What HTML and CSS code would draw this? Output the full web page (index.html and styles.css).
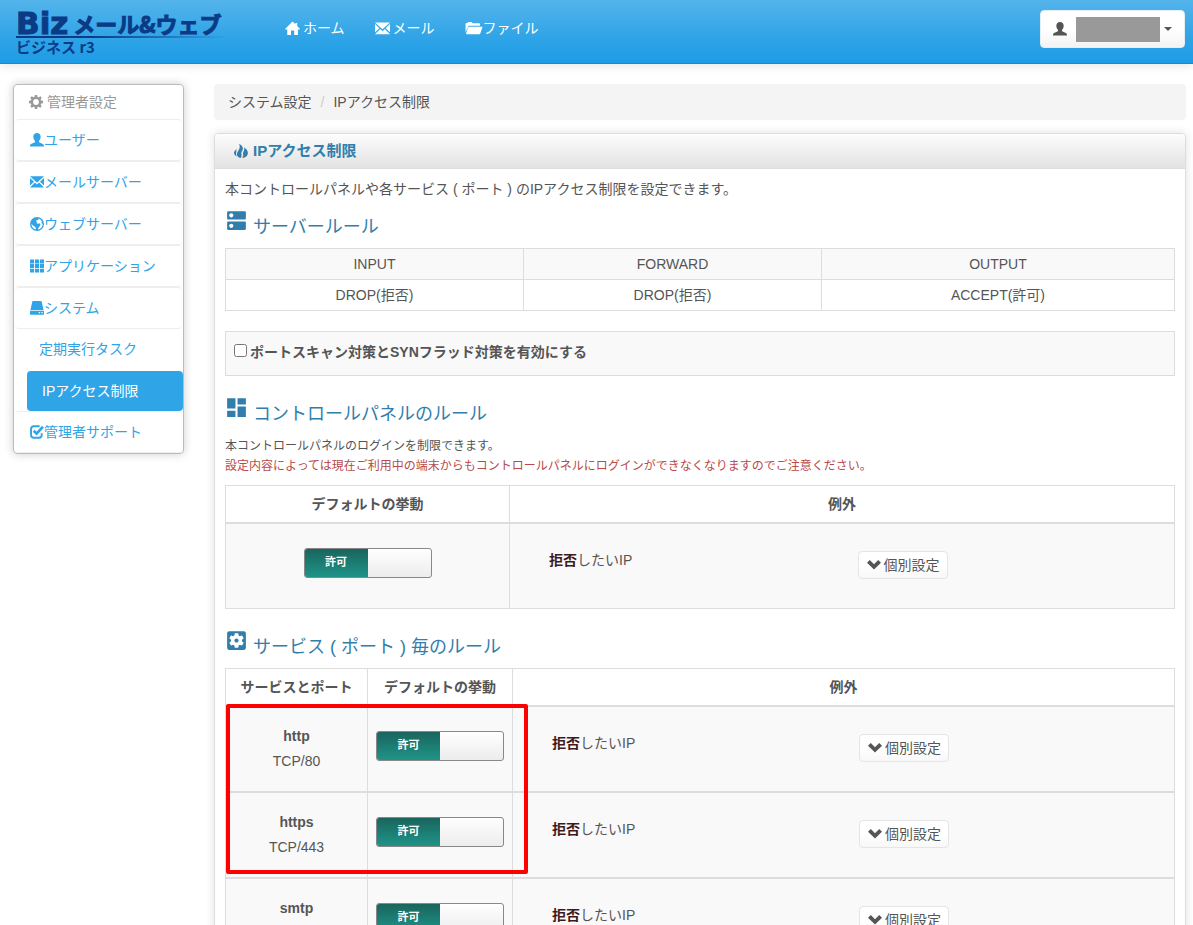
FILE: index.html
```html
<!DOCTYPE html>
<html lang="ja">
<head>
<meta charset="utf-8">
<title>IPアクセス制限</title>
<link rel="stylesheet" href="styles.css">
</head>
<body>
<svg class="sprite" aria-hidden="true">
  <symbol id="i-home" viewBox="0 0 16 16"><path d="M8 .5 11 3.400V2h2v3.300L16 8.400 15.300 9H13.800V15H9.800V10H6.400V15H2.400V9H.7L0 8.400z"/></symbol>
  <symbol id="i-mail" viewBox="0 0 16 16"><path d="M0 1.500H16L8 8.800zM0 3.300 4.600 7.600 0 12zM16 3.300V12L11.400 7.600zM5.600 8.600 8 10.800 10.400 8.600 16 14.200H0z"/></symbol>
  <symbol id="i-folder" viewBox="0 0 18 16"><path d="M0 12V3.500C0 2.500.5 2 1.500 2H2L3 1H6.500L7.500 2.500H14C15 2.500 15.500 3 15.500 4V5H4.500C3.500 5 3 5.300 2.700 6zM4 6H17.300C17.900 6 18.100 6.400 17.900 7L15.800 13C15.600 13.700 15.200 14 14.500 14H1.200C.6 14 .4 13.600.6 13L2.700 7C3 6.300 3.300 6 4 6z"/></symbol>
  <symbol id="i-user" viewBox="0 0 16 16"><path d="M8 0C10.500 0 12.200 1.600 12.200 4.300 12.200 6.500 11.300 8 10.300 9V10.200C10.300 10.800 14.400 11.900 15.400 13 15.800 13.500 16 14.200 16 15.500H0C0 14.200.2 13.500.6 13 1.600 11.900 5.700 10.800 5.700 10.200V9C4.700 8 3.800 6.500 3.800 4.300 3.800 1.600 5.500 0 8 0z"/></symbol>
  <symbol id="i-cog" viewBox="0 0 16 16"><path fill-rule="evenodd" d="M6.700 0H9.300L9.700 2.200 11 2.800 12.900 1.500 14.600 3.200 13.300 5 13.800 6.400 16 6.700V9.300L13.800 9.700 13.300 11 14.600 12.800 12.800 14.600 11 13.300 9.700 13.800 9.300 16H6.700L6.300 13.800 5 13.300 3.200 14.600 1.400 12.800 2.700 11 2.200 9.700 0 9.300V6.700L2.200 6.300 2.700 5 1.400 3.200 3.200 1.400 5 2.700 6.300 2.200zM8 4.700A3.300 3.300 0 1 0 8 11.300 3.300 3.300 0 1 0 8 4.700z"/></symbol>
  <symbol id="i-globe" viewBox="0 0 16 16"><path fill-rule="evenodd" d="M8 0A8 8 0 1 1 8 16 8 8 0 1 1 8 0zM9 1.600 10 3.500 8 3.300 6.800 4.500 8 5.600 7.500 7 9.300 7.600 11 7.200 12 8.600 11 10.500 9.600 12.600 9 14.300C12.300 13.800 14.400 11.200 14.500 8.200L13 6.600 13.600 5 11.600 2.700zM1.600 8C1.600 10.700 3.500 13.500 6.500 14.300L6.800 12.500 5.300 10.800 3.600 9.800z"/></symbol>
  <symbol id="i-th" viewBox="0 0 16 16"><path d="M0 .5H4.700V5H0zM5.700.5H10.300V5H5.700zM11.300.5H16V5H11.300zM0 5.700H4.700V10.200H0zM5.700 5.700H10.300V10.200H5.700zM11.300 5.700H16V10.200H11.300zM0 11H4.700V15.500H0zM5.700 11H10.300V15.500H5.700zM11.300 11H16V15.500H11.300z"/></symbol>
  <symbol id="i-hdd" viewBox="0 0 16 16"><path fill-rule="evenodd" d="M3.500 0H12.500C13 0 13.300.4 13.400.9L15.500 10.300H.5L2.600.9C2.700.4 3 0 3.500 0zM0 11.200H16V15.700H0zM10 12.700V14H11.500V12.700zM13 12.700V14H14.500V12.700z"/></symbol>
  <symbol id="i-check" viewBox="0 0 16 16"><path d="M11 1.500H4.300Q1.200 1.500 1.200 4.600V11.400Q1.200 14.500 4.300 14.500H10.400Q13.400 14.500 13.400 11.400V9.500" fill="none" stroke="currentColor" stroke-width="2.200"/><path d="M4.200 6.600 7.500 9.800 14.800 2" fill="none" stroke="currentColor" stroke-width="3"/></symbol>
  <symbol id="i-fire" viewBox="0 0 16 16"><path d="M5.800 0C9.500 1.500 11 4.300 9.700 7 8.800 8.800 8 9.800 8.600 12 9 13.500 8.400 15 7.500 16 3.800 15.200 2.600 12.500 3.800 9.600 5 6.800 8 4.500 5.800 0zM11.400 3.800C14.700 5.800 17 9.200 15.300 12.500 14.300 14.500 12.500 15.800 9.300 16 10.900 14 10.500 12.500 10.300 11 10.200 8.500 12.700 7.500 11.400 3.800zM2.700 5.500C3.300 8.300 1.500 10 3 14.300.6 13-.5 11 .2 9 .7 7.400 2.500 7.200 2.700 5.500z"/></symbol>
  <symbol id="i-chevron" viewBox="0 0 16 16"><path d="M3.200 2.300 8 7.200 12.800 2.300 16 5.400 8 13.200 0 5.400z"/></symbol>
  <symbol id="i-dns" viewBox="0 0 24 24"><path d="M20 13H4c-.55 0-1 .45-1 1v6c0 .55.45 1 1 1h16c.55 0 1-.45 1-1v-6c0-.55-.45-1-1-1zM7 19c-1.100 0-2-.9-2-2s.9-2 2-2 2 .9 2 2-.9 2-2 2zM20 3H4c-.55 0-1 .45-1 1v6c0 .55.45 1 1 1h16c.55 0 1-.45 1-1V4c0-.55-.45-1-1-1zM7 9c-1.100 0-2-.9-2-2s.9-2 2-2 2 .9 2 2-.9 2-2 2z"/></symbol>
  <symbol id="i-dash" viewBox="0 0 24 24"><path d="M3 13h8V3H3v10zm0 8h8v-6H3v6zm10 0h8V11h-8v10zm0-18v6h8V3h-8z"/></symbol>
  <symbol id="i-apps" viewBox="0 0 24 24"><path d="M12 10c-1.100 0-2 .9-2 2s.9 2 2 2 2-.9 2-2-.9-2-2-2zm7-7H5c-1.110 0-2 .9-2 2v14c0 1.100.89 2 2 2h14c1.110 0 2-.9 2-2V5c0-1.100-.89-2-2-2zm-1.750 9c0 .23-.02.46-.05.68l1.480 1.160c.13.11.17.3.08.45l-1.400 2.420c-.09.15-.27.21-.43.15l-1.740-.7c-.36.28-.76.51-1.180.69l-.26 1.850c-.03.17-.18.3-.35.3h-2.800c-.17 0-.32-.13-.35-.29l-.26-1.850c-.43-.18-.82-.41-1.180-.69l-1.740.7c-.16.06-.34 0-.43-.15l-1.400-2.420c-.09-.15-.05-.34.08-.45l1.480-1.160c-.03-.23-.05-.46-.05-.69 0-.23.02-.46.05-.68l-1.480-1.160c-.13-.11-.17-.3-.08-.45l1.400-2.420c.09-.15.27-.21.43-.15l1.740.7c.36-.28.76-.51 1.180-.69l.26-1.850c.03-.17.18-.3.35-.3h2.800c.17 0 .32.13.35.29l.26 1.850c.43.18.82.41 1.180.69l1.740-.7c.16-.06.34 0 .43.15l1.400 2.420c.09.15.05.34-.08.45l-1.480 1.160c.03.23.05.46.05.69z"/></symbol>
</svg>

<header class="topbar">
  <a class="logo" href="#">
    <span class="logo-main"><span class="logo-biz">Biz</span>メール&amp;ウェブ</span>
    <span class="logo-sub">ビジネス r3</span>
  </a>
  <nav class="topnav">
    <a href="#"><svg class="icon wide"><use href="#i-home"/></svg>ホーム</a>
    <a href="#"><svg class="icon wide"><use href="#i-mail"/></svg>メール</a>
    <a href="#"><svg class="icon folder"><use href="#i-folder"/></svg>ファイル</a>
  </nav>
  <button class="user" type="button" aria-label="ユーザーメニュー">
    <svg class="icon"><use href="#i-user"/></svg>
    <span class="mask"></span>
    <span class="caret"></span>
  </button>
</header>

<div class="layout">
  <aside class="side">
    <div class="side-title"><svg class="icon"><use href="#i-cog"/></svg>管理者設定</div>
    <a class="item" href="#"><svg class="icon"><use href="#i-user"/></svg>ユーザー</a>
    <a class="item" href="#"><svg class="icon"><use href="#i-mail"/></svg>メールサーバー</a>
    <a class="item" href="#"><svg class="icon"><use href="#i-globe"/></svg>ウェブサーバー</a>
    <a class="item" href="#"><svg class="icon"><use href="#i-th"/></svg>アプリケーション</a>
    <a class="item" href="#"><svg class="icon"><use href="#i-hdd"/></svg>システム</a>
    <a class="sub" href="#">定期実行タスク</a>
    <a class="sub active" href="#">IPアクセス制限</a>
    <a class="item" href="#"><svg class="icon"><use href="#i-check"/></svg>管理者サポート</a>
  </aside>

  <main class="content">
    <nav class="crumbs"><a href="#">システム設定</a><span class="slash">/</span><span>IPアクセス制限</span></nav>

    <section class="panel">
      <h2 class="panel-title"><svg class="icon"><use href="#i-fire"/></svg>IPアクセス制限</h2>
      <div class="panel-body">
        <p class="lead">本コントロールパネルや各サービス ( ポート ) のIPアクセス制限を設定できます。</p>

        <h3 class="heading first"><svg class="glyph"><use href="#i-dns"/></svg><span>サーバールール</span></h3>
        <table class="grid rules">
          <colgroup><col class="c-third"><col class="c-third"><col></colgroup>
          <tr class="shade"><td>INPUT</td><td>FORWARD</td><td>OUTPUT</td></tr>
          <tr><td>DROP(拒否)</td><td>DROP(拒否)</td><td>ACCEPT(許可)</td></tr>
        </table>

        <div class="option"><input type="checkbox" id="scan"><label for="scan">ポートスキャン対策とSYNフラッド対策を有効にする</label></div>

        <h3 class="heading"><svg class="glyph"><use href="#i-dash"/></svg><span>コントロールパネルのルール</span></h3>
        <div class="notes">
          <p>本コントロールパネルのログインを制限できます。</p>
          <p class="warn">設定内容によっては現在ご利用中の端末からもコントロールパネルにログインができなくなりますのでご注意ください。</p>
        </div>
        <table class="grid access panel-rule">
          <colgroup><col class="c-default"><col></colgroup>
          <thead><tr><th>デフォルトの挙動</th><th>例外</th></tr></thead>
          <tbody>
            <tr>
              <td><button class="switch" type="button" role="switch" aria-checked="true"><span>許可</span></button></td>
              <td><div class="exception"><span class="what"><b>拒否</b>したいIP</span><button class="detail" type="button"><svg class="icon"><use href="#i-chevron"/></svg>個別設定</button></div></td>
            </tr>
          </tbody>
        </table>

        <h3 class="heading"><svg class="glyph"><use href="#i-apps"/></svg><span>サービス ( ポート ) 毎のルール</span></h3>
        <div class="services">
          <table class="grid access">
            <colgroup><col class="c-service"><col class="c-toggle"><col></colgroup>
            <thead><tr><th>サービスとポート</th><th>デフォルトの挙動</th><th>例外</th></tr></thead>
            <tbody>
              <tr>
                <td class="port-cell"><div class="port"><b>http</b><span>TCP/80</span></div></td>
                <td><button class="switch" type="button" role="switch" aria-checked="true"><span>許可</span></button></td>
                <td><div class="exception"><span class="what"><b>拒否</b>したいIP</span><button class="detail" type="button"><svg class="icon"><use href="#i-chevron"/></svg>個別設定</button></div></td>
              </tr>
              <tr>
                <td class="port-cell"><div class="port"><b>https</b><span>TCP/443</span></div></td>
                <td><button class="switch" type="button" role="switch" aria-checked="true"><span>許可</span></button></td>
                <td><div class="exception"><span class="what"><b>拒否</b>したいIP</span><button class="detail" type="button"><svg class="icon"><use href="#i-chevron"/></svg>個別設定</button></div></td>
              </tr>
              <tr>
                <td class="port-cell"><div class="port"><b>smtp</b></div></td>
                <td><button class="switch" type="button" role="switch" aria-checked="true"><span>許可</span></button></td>
                <td><div class="exception"><span class="what"><b>拒否</b>したいIP</span><button class="detail" type="button"><svg class="icon"><use href="#i-chevron"/></svg>個別設定</button></div></td>
              </tr>
            </tbody>
          </table>
          <div class="marker"></div>
        </div>
      </div>
    </section>
  </main>
</div>
</body>
</html>
```

FILE: styles.css
```css
* { box-sizing: border-box; }

html { scrollbar-width: none; }

body {
  margin: 0;
  background: #fff;
  color: #555;
  font: 14px/20px "Liberation Sans", "Noto Sans CJK JP", sans-serif;
}

a { color: inherit; text-decoration: none; }
h2, h3, p { margin: 0; font-weight: normal; }
button { font: inherit; color: inherit; cursor: pointer; }

.sprite { display: none; }
.icon { width: 14px; height: 14px; flex: none; fill: currentColor; }
.icon.wide { width: 15px; height: 15px; }
.icon.folder { width: 18px; height: 15px; }

/* top bar */
.topbar {
  display: flex;
  align-items: flex-start;
  min-height: 64px;
  padding: 0 8px 0 16px;
  border-bottom: 1px solid #178acc;
  background: linear-gradient(#54b4eb, #2fa4e7 60%, #1d9ce5);
  box-shadow: 0 1px 10px rgba(0, 0, 0, 0.12);
}

.logo {
  display: flex;
  flex-direction: column;
  width: 240px;
  padding-top: 10px;
  color: #0b3a86;
  font-family: "Noto Sans CJK JP", sans-serif;
  font-weight: bold;
}
.logo-main {
  display: flex;
  align-items: center;
  gap: 5px;
  height: 28px;
  font-size: 22px;
  line-height: 24px;
  white-space: nowrap;
  -webkit-text-stroke: 1px #0b3a86;
  border-bottom: 2px solid;
  border-image: linear-gradient(90deg, #0b3a86 30%, transparent 88%) 1;
}
.logo-biz {
  font-family: "DejaVu Sans", sans-serif;
  font-size: 31px;
}
.logo-sub { font-size: 15px; line-height: 17px; }

.topnav {
  display: flex;
  gap: 30px;
  padding-top: 18px;
  margin-left: 29px;
  color: #fff;
}
.topnav a { display: flex; align-items: center; gap: 3px; }
.topnav a:last-child { gap: 0; }

.user {
  display: flex;
  align-items: center;
  gap: 9px;
  height: 38px;
  margin: 10px 0 0 auto;
  padding: 0 12px;
  border: 1px solid #e4eef5;
  border-radius: 4px;
  background: linear-gradient(#fff 50%, #f3f3f3);
}
.mask { width: 84px; height: 25px; background: #999; }
.caret { border: 4px solid transparent; border-top-color: #555; border-bottom: 0; margin-left: -5px; }

/* page layout */
.layout {
  display: grid;
  grid-template-columns: 171px minmax(0, 1fr);
  gap: 30px;
  align-items: start;
  padding: 20px 7px 0 13px;
}

.side {
  display: flex;
  flex-direction: column;
  border: 1px solid #bbb;
  border-radius: 4px;
  box-shadow: 0 0 10px rgba(0, 0, 0, 0.2);
  color: #2fa4e7;
}
.side-title {
  display: flex;
  align-items: center;
  gap: 4px;
  height: 34px;
  padding-left: 15px;
  color: #999;
}
.item {
  display: flex;
  align-items: center;
  height: 42px;
  margin: 0 1px;
  padding-left: 15px;
  border: 1px solid #eee;
  border-width: 1px 0;
  border-radius: 4px;
}
.sub { padding: 10px 0 12px 25px; }
.sub.active {
  margin-left: 13px;
  padding: 10px 15px;
  border-radius: 4px;
  background: #2fa4e7;
  color: #fff;
}

.crumbs {
  display: flex;
  padding: 8px 14px;
  border-radius: 4px;
  background: #f4f4f4;
}
.slash { padding: 0 9px; color: #ccc; }

.panel {
  margin-top: 13px;
  border: 1px solid #ddd;
  border-radius: 4px;
  box-shadow: 0 0 10px rgba(0, 0, 0, 0.12);
}
.panel-title {
  display: flex;
  align-items: center;
  gap: 5px;
  height: 35px;
  padding-left: 19px;
  border-bottom: 1px solid #ddd;
  border-radius: 4px 4px 0 0;
  background: linear-gradient(#fdfdfd, #e2e2e2);
  color: #317eac;
  font-size: 15px;
  font-weight: bold;
}
.panel-body { padding: 10px; }

.heading {
  display: flex;
  gap: 4px;
  margin: 19px 0 11px -1px;
  color: #317eac;
  font-size: 18px;
  line-height: 20px;
}
.heading.first { margin-top: 9px; }
.heading span { padding-top: 9px; }
.glyph { width: 25px; height: 25px; flex: none; fill: currentColor; }

.notes { padding: 1px 0 9px; font-size: 12px; }
.warn { color: #b94a48; }

/* tables */
.grid {
  width: 100%;
  border-collapse: collapse;
  table-layout: fixed;
  text-align: center;
}
.grid td, .grid th { border: 1px solid #ddd; }
.rules td { padding: 5px 8px; }
.shade td { background: #f9f9f9; }
.c-third { width: 31.4%; }
.c-default { width: 284px; }
.c-service { width: 142px; }
.c-toggle { width: 145px; }

.option {
  display: flex;
  align-items: flex-start;
  gap: 3px;
  min-height: 45px;
  margin-top: 20px;
  padding: 10px 8px;
  border: 1px solid #ddd;
  background: #f9f9f9;
  font-weight: bold;
}
.option input { width: 13px; height: 13px; margin: 2px 0 0; }

.access th { padding: 8px 0; }
.access td {
  height: 86px;
  padding: 24px 8px 0;
  border-top-width: 2px;
  background: #f9f9f9;
  vertical-align: top;
}
.panel-rule td { height: 85px; }
.access .port-cell { padding-top: 19px; }

.port { display: flex; flex-direction: column; gap: 5px; }

.switch {
  display: inline-flex;
  width: 128px;
  height: 30px;
  padding: 0;
  border: 1px solid #888;
  border-radius: 3px;
  overflow: hidden;
  background: linear-gradient(#fff, #ececec);
  vertical-align: top;
}
.switch span {
  width: 50%;
  height: 100%;
  background: linear-gradient(#1a655d, #1f9488);
  color: #fff;
  font-size: 11px;
  font-weight: bold;
  line-height: 26px;
}

.exception {
  display: grid;
  grid-template-columns: 1fr 1fr;
  align-items: start;
  padding: 2px 0 0 31px;
  text-align: left;
}
.what b { color: #3f1a1c; }
.detail {
  display: flex;
  align-items: center;
  justify-self: start;
  gap: 3px;
  height: 28px;
  margin-top: 1px;
  padding: 0 7px 0 8px;
  border: 1px solid #e5e5e5;
  border-radius: 4px;
  background: linear-gradient(#fff 50%, #f8f8f8);
}

.services { position: relative; }
.marker {
  position: absolute;
  top: 36px;
  left: 1px;
  width: 302px;
  height: 170px;
  border: 4px solid #f00;
  border-radius: 2px;
  pointer-events: none;
}
```
